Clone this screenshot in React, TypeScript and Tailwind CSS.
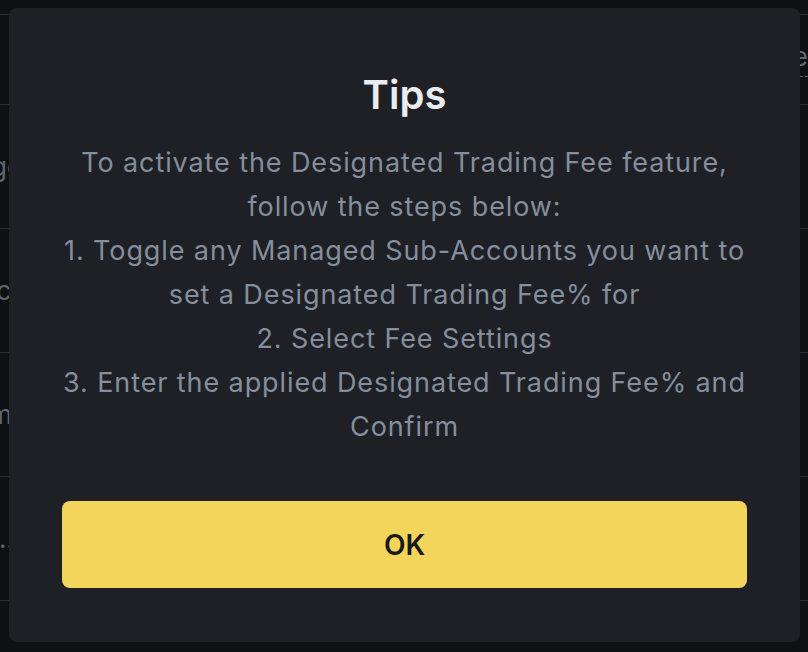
import React from "react";

const rows = [
  { left: "Togg", width: "w-[23px]" },
  { left: "Sync", width: "w-[11px]" },
  { left: "Confirm", width: "w-[12px]" },
  { left: "..", width: "w-[14px]" },
];

function BackgroundTable() {
  return (
    <div className="flex flex-col text-[26px] text-[#5f6670]">
      <div className="h-[14px]" />
      <div className="h-[90px] border-t border-[#2a2d35] flex items-center justify-end">
        <span className="whitespace-nowrap border-b border-dashed border-[#5f6670] pb-1 leading-[30px]">
          Fee
        </span>
      </div>
      {rows.map((row, i) => (
        <div
          key={i}
          className="h-[124px] border-t border-[#2a2d35] flex items-center"
        >
          <div className={`${row.width} flex justify-end whitespace-nowrap`}>
            <span>{row.left}</span>
          </div>
        </div>
      ))}
      <div className="h-[54px] border-t border-[#2a2d35]" />
    </div>
  );
}

export default function App() {
  return (
    <div
      className="relative w-[808px] h-[652px] overflow-hidden bg-[#0e1014]"
      style={{ fontFamily: "Inter, 'Noto Sans', sans-serif" }}
    >
      <BackgroundTable />

      <div className="absolute left-[9px] top-[8px] w-[791px] h-[634px] rounded-lg bg-[#1e2026] px-[53px] pt-[63px] pb-[54px] flex flex-col items-center">
        <h2 className="text-[40px] leading-[48px] font-semibold text-[#eaecef]">
          Tips
        </h2>
        <p className="mt-[22px] text-[27px] leading-[44px] tracking-[0.9px] text-[#848e9c] text-center whitespace-pre-line">
          {"To activate the Designated Trading Fee feature,\nfollow the steps below:\n1. Toggle any Managed Sub-Accounts you want to\nset a Designated Trading Fee% for\n2. Select Fee Settings\n3. Enter the applied Designated Trading Fee% and\nConfirm"}
        </p>
        <button className="mt-auto w-full h-[87px] rounded-lg bg-[#f4d55b] text-[28px] font-semibold text-[#181a20]">
          OK
        </button>
      </div>
    </div>
  );
}
